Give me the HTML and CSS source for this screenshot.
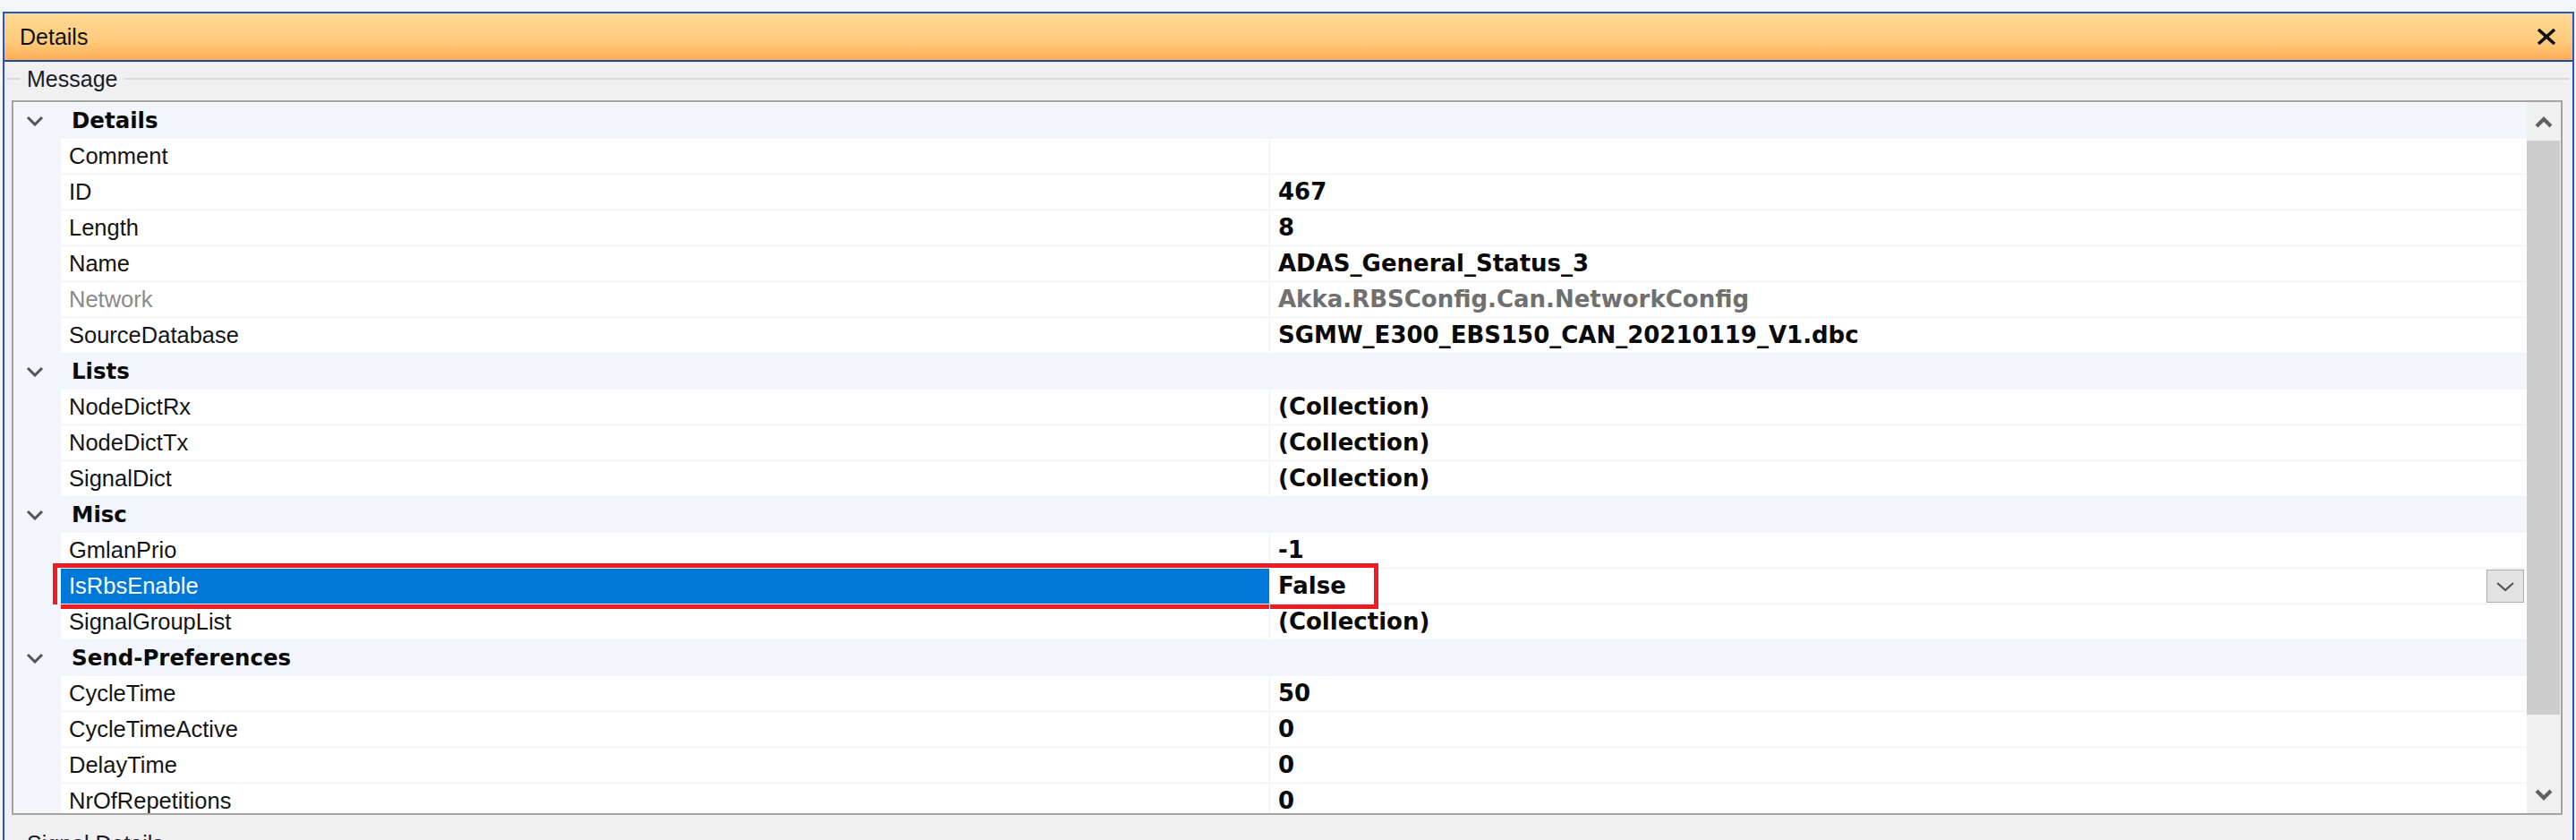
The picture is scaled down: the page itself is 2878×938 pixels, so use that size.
FILE: index.html
```html
<!DOCTYPE html>
<html>
<head>
<meta charset="utf-8">
<title>Details</title>
<link rel="stylesheet" href="styles.css">
</head>
<body>
<div class="window">
  <div class="titlebar">
    <span class="title">Details</span>
    <svg class="close" width="22" height="18" viewBox="0 0 22 18"><path d="M2 1 L20 17 M20 1 L2 17" stroke="#111" stroke-width="3.6" fill="none"/></svg>
  </div>
  <div class="content">
    <div class="legend"><span class="line short"></span><span class="legend-text">Message</span><span class="line long"></span></div>
    <div class="frame">
      <div class="grid">
        <div class="row cat"><div class="gut"><svg width="20" height="12" viewBox="0 0 20 12"><path d="M2 2 L10 10 L18 2" stroke="#555" stroke-width="3" fill="none"/></svg></div><div class="cat-name">Details</div></div>
        <div class="row"><div class="gut"></div><div class="name">Comment</div><div class="val"></div></div>
        <div class="row"><div class="gut"></div><div class="name">ID</div><div class="val">467</div></div>
        <div class="row"><div class="gut"></div><div class="name">Length</div><div class="val">8</div></div>
        <div class="row"><div class="gut"></div><div class="name">Name</div><div class="val">ADAS_General_Status_3</div></div>
        <div class="row"><div class="gut"></div><div class="name ro">Network</div><div class="val ro">Akka.RBSConfig.Can.NetworkConfig</div></div>
        <div class="row"><div class="gut"></div><div class="name">SourceDatabase</div><div class="val">SGMW_E300_EBS150_CAN_20210119_V1.dbc</div></div>
        <div class="row cat"><div class="gut"><svg width="20" height="12" viewBox="0 0 20 12"><path d="M2 2 L10 10 L18 2" stroke="#555" stroke-width="3" fill="none"/></svg></div><div class="cat-name">Lists</div></div>
        <div class="row"><div class="gut"></div><div class="name">NodeDictRx</div><div class="val">(Collection)</div></div>
        <div class="row"><div class="gut"></div><div class="name">NodeDictTx</div><div class="val">(Collection)</div></div>
        <div class="row"><div class="gut"></div><div class="name">SignalDict</div><div class="val">(Collection)</div></div>
        <div class="row cat"><div class="gut"><svg width="20" height="12" viewBox="0 0 20 12"><path d="M2 2 L10 10 L18 2" stroke="#555" stroke-width="3" fill="none"/></svg></div><div class="cat-name">Misc</div></div>
        <div class="row"><div class="gut"></div><div class="name">GmlanPrio</div><div class="val">-1</div></div>
        <div class="row selected"><div class="gut"></div><div class="name">IsRbsEnable</div><div class="val">False<span class="dd"><svg width="22" height="12" viewBox="0 0 22 12"><path d="M2 2 L11 10 L20 2" stroke="#555" stroke-width="2.2" fill="none"/></svg></span></div><div class="redbox"></div></div>
        <div class="row"><div class="gut"></div><div class="name">SignalGroupList</div><div class="val">(Collection)</div></div>
        <div class="row cat"><div class="gut"><svg width="20" height="12" viewBox="0 0 20 12"><path d="M2 2 L10 10 L18 2" stroke="#555" stroke-width="3" fill="none"/></svg></div><div class="cat-name">Send-Preferences</div></div>
        <div class="row"><div class="gut"></div><div class="name">CycleTime</div><div class="val">50</div></div>
        <div class="row"><div class="gut"></div><div class="name">CycleTimeActive</div><div class="val">0</div></div>
        <div class="row"><div class="gut"></div><div class="name">DelayTime</div><div class="val">0</div></div>
        <div class="row"><div class="gut"></div><div class="name">NrOfRepetitions</div><div class="val">0</div></div>
      </div>
      <div class="scrollbar">
        <div class="sb-btn sb-up"><svg width="20" height="14" viewBox="0 0 20 14"><path d="M2 12 L10 4 L18 12" stroke="#606060" stroke-width="4.2" fill="none"/></svg></div>
        <div class="sb-track"><div class="sb-thumb"></div></div>
        <div class="sb-btn sb-down"><svg width="20" height="14" viewBox="0 0 20 14"><path d="M2 2 L10 10 L18 2" stroke="#606060" stroke-width="4.2" fill="none"/></svg></div>
      </div>
    </div>
    <div class="legend legend-bottom"><span class="line short"></span><span class="legend-text">Signal Details</span><span class="line long"></span></div>
  </div>
</div>
</body>
</html>
```
FILE: styles.css
```css
html, body {
  margin: 0;
  padding: 0;
  height: 938px;
  overflow: hidden;
  background: #f4f6f9;
}
body {
  padding-top: 13px;
  box-sizing: border-box;
  font-family: "Liberation Sans", Arial, sans-serif;
  color: #111;
}
.window {
  margin-left: 3px;
  width: 2873px;
  height: 925px;
  box-sizing: border-box;
  border: 2px solid #2a55c4;
  border-bottom: none;
  background: #f0f0f0;
  overflow: hidden;
}
.titlebar {
  height: 54px;
  box-sizing: border-box;
  border-bottom: 2px solid #1f46a8;
  background: linear-gradient(#ffd993, #ffcb7c 60%, #ffae55);
  display: flex;
  align-items: center;
  justify-content: space-between;
  padding: 0 18px 0 17px;
}
.title {
  font-size: 25px;
  color: #111;
}
.close {
  display: block;
}
.content {
  padding-left: 2px;
}
.legend {
  height: 38px;
  display: flex;
  align-items: center;
}
.line {
  height: 2px;
  background: #dadada;
}
.line.short {
  width: 15px;
}
.line.long {
  flex: 1;
  margin-right: 4px;
}
.legend-text {
  font-size: 25px;
  color: #1a1a2a;
  padding: 0 8px;
  line-height: 30px;
}
.legend-bottom {
  margin-top: 17px;
  height: 30px;
}
.frame {
  margin-top: 5px;
  margin-left: 6px;
  width: 2850px;
  height: 798px;
  box-sizing: border-box;
  border: 2px solid #a3a3a3;
  display: flex;
  background: #fff;
}
.grid {
  flex: 1;
  padding-top: 1px;
  overflow: hidden;
  background: #fff;
}
.row {
  display: grid;
  grid-template-columns: 53px 1350px 1fr;
  height: 40px;
  position: relative;
}
.gut {
  background: #f2f5fb;
  display: flex;
  align-items: center;
  padding-left: 14px;
}
.gut svg {
  display: block;
}
.name, .val {
  box-sizing: border-box;
  border-bottom: 1px solid #edf1f8;
  line-height: 39px;
  white-space: nowrap;
  overflow: hidden;
}
.name {
  font-size: 25.5px;
  padding-left: 9px;
  color: #141414;
}
.val {
  border-left: 1px solid #edf1f8;
  padding-left: 9px;
  font-family: "DejaVu Sans", Verdana, sans-serif;
  font-weight: bold;
  font-size: 26px;
  color: #0a0a0a;
  display: flex;
  align-items: center;
}
.name.ro {
  color: #8a8a8a;
}
.val.ro {
  color: #707070;
}
.row.cat {
  background: #f2f5fb;
}
.cat-name {
  grid-column: 2 / 4;
  font-family: "DejaVu Sans", Verdana, sans-serif;
  font-weight: bold;
  font-size: 24.5px;
  line-height: 40px;
  padding-left: 12px;
  color: #0a0a0a;
}
.row.selected .name {
  background: #0078d7;
  color: #fff;
  border-bottom: 1px solid #e4ecf8;
}
.dd {
  margin-left: auto;
  margin-right: 3px;
  width: 42px;
  height: 37px;
  box-sizing: border-box;
  border: 1px solid #adadad;
  background: #e3e3e3;
  display: flex;
  align-items: center;
  justify-content: center;
}
.dd svg {
  display: block;
}
.redbox {
  position: absolute;
  left: 44px;
  top: -6px;
  width: 1481px;
  height: 51px;
  box-sizing: border-box;
  border: 5px solid #ed1c24;
  pointer-events: none;
}
.scrollbar {
  width: 38px;
  background: #f0f0f0;
  display: flex;
  flex-direction: column;
}
.sb-btn {
  display: flex;
  align-items: center;
  justify-content: center;
}
.sb-up {
  height: 43px;
}
.sb-down {
  height: 40px;
}
.sb-track {
  flex: 1;
}
.sb-thumb {
  height: 641px;
  margin: 0 1px 0 0;
  background: #cdcdcd;
}
```
